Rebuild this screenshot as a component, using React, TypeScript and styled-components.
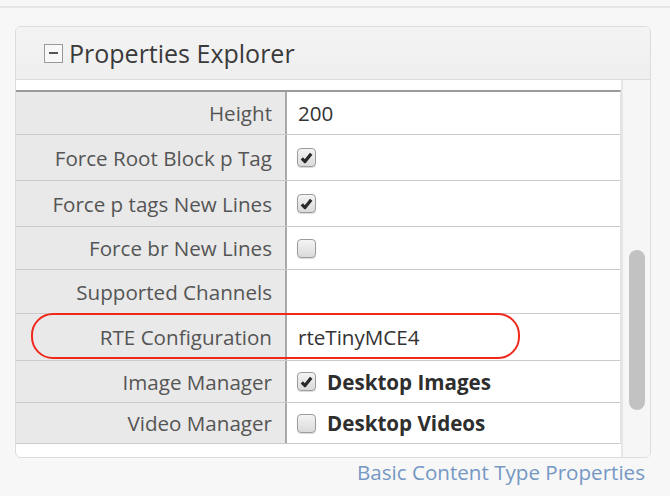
import React from 'react';
import styled, { createGlobalStyle } from 'styled-components';

const GlobalStyle = createGlobalStyle`
  body {
    margin: 0;
    background: #f7f7f7;
    font-family: "Open Sans", "Noto Sans", sans-serif;
  }
`;

const Page = styled.div`
  width: 670px;
  height: 496px;
  overflow: hidden;
  position: relative;
`;

const TopRule = styled.div`
  height: 6px;
  border-bottom: 2px solid #e6e6e6;
`;

const Panel = styled.div`
  margin: 18px 0 0 15px;
  width: 634px;
  border: 1px solid #dcdcdc;
  border-radius: 6px;
  background: #fff;
  overflow: hidden;
`;

const PanelHeader = styled.div`
  height: 52px;
  display: flex;
  align-items: center;
  gap: 6px;
  padding-left: 28px;
  background: linear-gradient(#f3f3f3, #efefef);
  border-bottom: 1px solid #dcdcdc;
  color: #3a3a3a;
  font-size: 25px;
`;

const Collapse = styled.span`
  width: 17px;
  height: 17px;
  border: 1px solid #9a9a9a;
  background: #f8f8f8;
  display: flex;
  align-items: center;
  justify-content: center;
  &::after {
    content: '';
    width: 9px;
    height: 2px;
    background: #555;
  }
`;

const PanelBody = styled.div`
  display: flex;
`;

const TableArea = styled.div`
  flex: 1;
  padding: 10px 0 13px;
`;

const ScrollTrack = styled.div`
  width: 27px;
  border-left: 2px solid #e6e6e6;
  background: #f6f6f6;
  display: flex;
  flex-direction: column;
  align-items: center;
  padding-top: 170px;
`;

const Thumb = styled.div`
  width: 16px;
  height: 160px;
  border-radius: 8px;
  background: #c2c2c2;
`;

const Table = styled.div`
  border-top: 2px solid #9a9a9a;
  border-right: 1px solid #e2e2e2;
`;

const Row = styled.div<{ $h: number }>`
  display: flex;
  height: ${(p) => p.$h}px;
  border-bottom: 1px solid #cbcbcb;
`;

const Label = styled.div`
  width: 256px;
  flex: none;
  background: #e9e9e9;
  border-right: 2px solid #a9a9a9;
  color: #555;
  font-size: 20.6px;
  padding-right: 13px;
  display: flex;
  align-items: center;
  justify-content: flex-end;
  white-space: nowrap;
`;

const Value = styled.div`
  flex: 1;
  display: flex;
  align-items: center;
  gap: 11px;
  padding-left: 10px;
  color: #333;
  font-size: 20.6px;
`;

const Text = styled.span`
  padding-left: 1px;
`;

const Strong = styled.span`
  font-weight: 700;
  color: #2e2e2e;
`;

const Box = styled.span`
  width: 17px;
  height: 17px;
  border: 1px solid #9c9c9c;
  border-radius: 4px;
  background: linear-gradient(#f4f4f4, #dadada);
  box-shadow: 0 1px 1px rgba(0, 0, 0, 0.15);
  display: flex;
  align-items: center;
  justify-content: center;
`;

const Highlight = styled.div`
  position: absolute;
  left: 31px;
  top: 313px;
  width: 485px;
  height: 42px;
  border: 2px solid #f0281c;
  border-radius: 22px;
  pointer-events: none;
`;

const Footer = styled.div`
  width: 645px;
  text-align: right;
  color: #7597c4;
  font-size: 20.6px;
`;

const Check = () => (
  <svg width="13" height="12" viewBox="0 0 13 12">
    <path d="M1.8 6.4 L5 9.6 L11.2 1.8" fill="none" stroke="#2a2a2a" strokeWidth="3.2" strokeLinejoin="round" />
  </svg>
);

const rows: { label: string; h: number; value: React.ReactNode }[] = [
  { label: 'Height', h: 42, value: <Text>200</Text> },
  { label: 'Force Root Block p Tag', h: 45, value: <Box><Check /></Box> },
  { label: 'Force p tags New Lines', h: 45, value: <Box><Check /></Box> },
  { label: 'Force br New Lines', h: 42, value: <Box /> },
  { label: 'Supported Channels', h: 43, value: null },
  { label: 'RTE Configuration', h: 46, value: <Text>rteTinyMCE4</Text> },
  { label: 'Image Manager', h: 41, value: <><Box><Check /></Box><Strong>Desktop Images</Strong></> },
  { label: 'Video Manager', h: 40, value: <><Box /><Strong>Desktop Videos</Strong></> },
];

const App: React.FC = () => {
  return (
    <Page>
      <GlobalStyle />
      <TopRule />
      <Panel>
        <PanelHeader>
          <Collapse />
          Properties Explorer
        </PanelHeader>
        <PanelBody>
          <TableArea>
            <Table>
              {rows.map((r) => (
                <Row key={r.label} $h={r.h}>
                  <Label>{r.label}</Label>
                  <Value>{r.value}</Value>
                </Row>
              ))}
            </Table>
          </TableArea>
          <ScrollTrack>
            <Thumb />
          </ScrollTrack>
        </PanelBody>
      </Panel>
      <Footer>Basic Content Type Properties</Footer>
      <Highlight />
    </Page>
  );
};

export default App;
